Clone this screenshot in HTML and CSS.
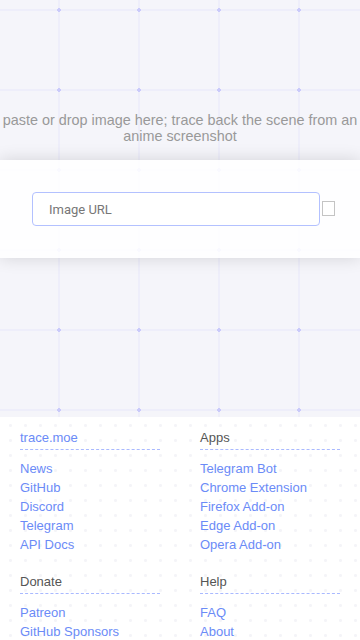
FILE: index.html
```html
<!DOCTYPE html>
<html lang="en">
<head>
  <meta charset="UTF-8" />
  <meta name="viewport" content="width=device-width, initial-scale=1.0"/>
  <title>trace.moe</title>
  <link rel="stylesheet" href="styles.css">
</head>
<body>
  <div class="main">
    <div class="hint">paste or drop image here; trace back the scene from an anime screenshot</div>

    <div class="search-card">
      <div class="search-row">
        <input class="url-input" type="text" placeholder="Image URL">
        <span class="cut-box"></span>
      </div>
    </div>
  </div>

  <footer class="footer">
    <div class="footer-col">
      <div class="footer-section">
        <a class="footer-title link" href="#">trace.moe</a>
        <ul>
          <li><a class="link" href="#">News</a></li>
          <li><a class="link" href="#">GitHub</a></li>
          <li><a class="link" href="#">Discord</a></li>
          <li><a class="link" href="#">Telegram</a></li>
          <li><a class="link" href="#">API Docs</a></li>
        </ul>
      </div>
      <div class="footer-section">
        <div class="footer-title">Donate</div>
        <ul>
          <li><a class="link" href="#">Patreon</a></li>
          <li><a class="link" href="#">GitHub Sponsors</a></li>
        </ul>
      </div>
    </div>
    <div class="footer-col">
      <div class="footer-section">
        <div class="footer-title">Apps</div>
        <ul>
          <li><a class="link" href="#">Telegram Bot</a></li>
          <li><a class="link" href="#">Chrome Extension</a></li>
          <li><a class="link" href="#">Firefox Add-on</a></li>
          <li><a class="link" href="#">Edge Add-on</a></li>
          <li><a class="link" href="#">Opera Add-on</a></li>
        </ul>
      </div>
      <div class="footer-section">
        <div class="footer-title">Help</div>
        <ul>
          <li><a class="link" href="#">FAQ</a></li>
          <li><a class="link" href="#">About</a></li>
        </ul>
      </div>
    </div>
  </footer>
</body>
</html>
```

FILE: styles.css
```css
body {
  margin: 0;
  font-family: "Liberation Sans", Arial, sans-serif;
  background-color: #f5f5fa;
  /* grid: dots on crossings, then vertical and horizontal lines */
  background-image:
    radial-gradient(circle at 59px 10px, #cacafa 1.6px, transparent 1.9px),
    linear-gradient(90deg, transparent 58px, #eeeefa 58px, #eeeefa 60px, transparent 60px),
    linear-gradient(180deg, transparent 9px, #eeeefa 9px, #eeeefa 11px, transparent 11px);
  background-size: 80px 80px;
}

.main {
  padding-top: 112px;
  height: 305px;
}

.hint {
  font-size: 14.4px;
  line-height: 16px;
  color: #999;
  text-align: center;
  margin-bottom: 16px;
}

.search-card {
  background: rgba(255, 255, 255, 0.88);
  box-shadow: 0 0 16px rgba(0, 0, 0, 0.14);
  padding: 32px 0;
}

.search-row {
  display: flex;
  align-items: center;
  padding-left: 32px;
  gap: 2px;
}

.url-input {
  box-sizing: border-box;
  width: 288px;
  height: 34px;
  padding: 0 16px;
  border: 1px solid #b3c1ff;
  border-radius: 4px;
  background: #fff;
  font-family: Roboto, "Liberation Sans", sans-serif;
  font-size: 13px;
  color: #333;
  outline: none;
}

.url-input::placeholder {
  color: #777;
}

.cut-box {
  box-sizing: border-box;
  width: 13px;
  height: 15px;
  border: 1px solid #c4c4c4;
  background: #fff;
  margin-top: -2px;
}

.footer {
  display: flex;
  padding: 11px 20px 20px;
  gap: 40px;
  background-color: #fff;
  background-image: radial-gradient(circle, #f4f4f8 1.2px, transparent 1.7px);
  background-size: 15px 15px;
  background-position: 3px 1px;
}

.footer-col {
  width: 140px;
}

.footer-section {
  margin-bottom: 18px;
}

.footer-title {
  display: block;
  font-size: 13px;
  line-height: 19px;
  color: #555;
  padding-bottom: 2px;
  border-bottom: 1px dashed #a9b9ff;
  margin-bottom: 9px;
  text-decoration: none;
}

.footer ul {
  list-style: none;
  margin: 0;
  padding: 0;
}

.footer li {
  font-size: 13px;
  line-height: 19px;
}

.link,
.footer-title.link {
  color: #6b8bf7;
  text-decoration: none;
}
```
